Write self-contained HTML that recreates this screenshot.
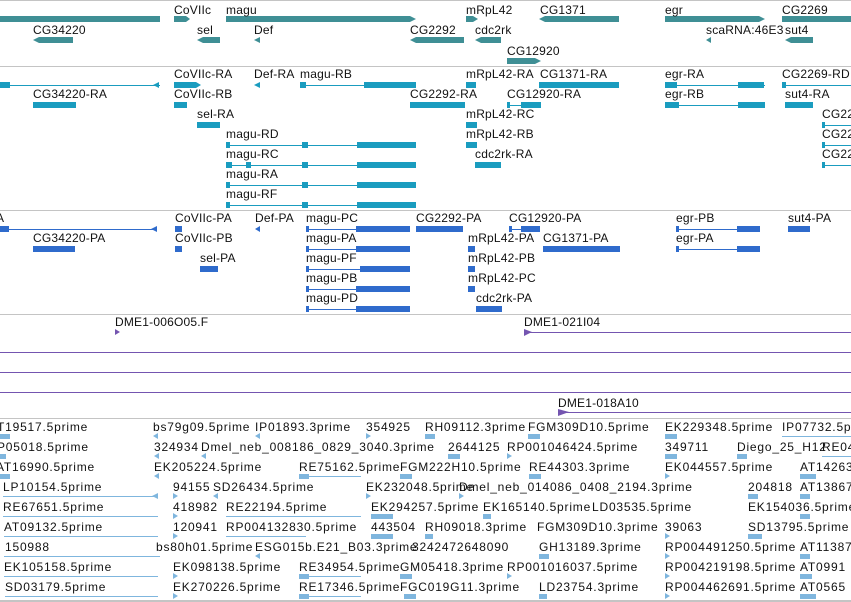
<!DOCTYPE html>
<html><head><meta charset="utf-8"><style>
html,body{margin:0;padding:0;background:#fff;width:851px;height:602px;overflow:hidden}
svg{display:block}
text{font-family:"Liberation Sans","DejaVu Sans",sans-serif;font-size:12px;fill:#111;letter-spacing:0.2px}
.lo text{letter-spacing:0.8px}
</style></head><body>
<svg width="851" height="602" viewBox="0 0 851 602">
<g fill="#c4c4c4">
<rect x="0" y="0" width="851" height="1"/>
<rect x="0" y="66" width="851" height="1"/>
<rect x="0" y="210" width="851" height="1"/>
<rect x="0" y="314" width="851" height="1"/>
<rect x="0" y="418" width="851" height="1"/>
<rect x="0" y="600" width="851" height="2"/>
</g>

<g fill="#3f8f95">
<rect x="0" y="16" width="160" height="6"/>
<polygon points="174,16 186,16 190,19 186,22 174,22"/>
<polygon points="226,16 410,16 416,19 410,22 226,22"/>
<polygon points="466,16 473,16 478,19 473,22 466,22"/>
<polygon points="545,16 619,16 619,22 545,22 539,19"/>
<polygon points="665,16 759,16 765,19 759,22 665,22"/>
<rect x="782" y="16" width="69" height="6"/>
<polygon points="39,37 73,37 73,43 39,43 33,40"/>
<polygon points="203,37 220,37 220,43 203,43 197,40"/>
<polygon points="254,40 260,37 260,43"/>
<polygon points="416,37 464,37 464,43 416,43 410,40"/>
<polygon points="481,37 501,37 501,43 481,43 475,40"/>
<polygon points="706,40 711,37 711,43"/>
<polygon points="791,37 813,37 813,43 791,43 785,40"/>
<polygon points="507,58 535,58 541,61 535,64 507,64"/>
</g>
<g>
<text x="174" y="14">CoVIIc</text><text x="226" y="14">magu</text><text x="466" y="14">mRpL42</text><text x="540" y="14">CG1371</text><text x="665" y="14">egr</text><text x="782" y="14">CG2269</text>
<text x="33" y="34">CG34220</text><text x="197" y="34">sel</text><text x="254" y="34">Def</text><text x="410" y="34">CG2292</text><text x="475" y="34">cdc2rk</text><text x="706" y="34">scaRNA:46E3</text><text x="785" y="34">sut4</text>
<text x="507" y="55">CG12920</text>
</g>

<g fill="#1a9cbf">
<rect x="0" y="85" width="160" height="1"/><rect x="0" y="82" width="10" height="6"/><polygon points="153,85 159,82 159,88"/>
<rect x="174" y="82" width="22" height="6"/><polygon points="196,82 201,85 196,88"/>
<polygon points="254,85 260,82 260,88"/>
<rect x="300" y="85" width="116" height="1"/><rect x="300" y="82" width="6" height="6"/><rect x="364" y="82" width="52" height="6"/>
<rect x="466" y="82" width="10" height="6"/>
<rect x="539" y="82" width="80" height="6"/>
<rect x="665" y="85" width="100" height="1"/><rect x="665" y="82" width="12" height="6"/><rect x="738" y="82" width="26" height="6"/>
<rect x="782" y="85" width="69" height="1"/><rect x="782" y="82" width="4" height="6"/>

<rect x="33" y="102" width="43" height="6"/>
<rect x="174" y="102" width="13" height="6"/>
<rect x="410" y="102" width="55" height="6"/>
<rect x="507" y="105" width="34" height="1"/><rect x="507" y="102" width="3" height="6"/><rect x="521" y="102" width="20" height="6"/>
<rect x="665" y="105" width="100" height="1"/><rect x="665" y="102" width="14" height="6"/><rect x="738" y="102" width="27" height="6"/>
<rect x="785" y="102" width="28" height="6"/>

<rect x="197" y="122" width="23" height="6"/>
<rect x="466" y="122" width="11" height="6"/>
<rect x="822" y="125" width="29" height="1"/><rect x="822" y="122" width="3" height="6"/>

<rect x="226" y="145" width="190" height="1"/><rect x="226" y="142" width="4" height="6"/><rect x="302" y="142" width="6" height="6"/><rect x="357" y="142" width="59" height="6"/>
<rect x="466" y="142" width="11" height="6"/>
<rect x="822" y="145" width="29" height="1"/><rect x="822" y="142" width="3" height="6"/>

<rect x="226" y="165" width="190" height="1"/><rect x="226" y="162" width="6" height="6"/><rect x="246" y="162" width="5" height="6"/><rect x="302" y="162" width="6" height="6"/><rect x="357" y="162" width="59" height="6"/>
<rect x="475" y="162" width="26" height="6"/>
<rect x="822" y="165" width="29" height="1"/><rect x="822" y="162" width="3" height="6"/>

<rect x="226" y="185" width="190" height="1"/><rect x="226" y="182" width="4" height="6"/><rect x="302" y="182" width="6" height="6"/><rect x="357" y="182" width="59" height="6"/>
<rect x="226" y="205" width="190" height="1"/><rect x="226" y="202" width="4" height="6"/><rect x="302" y="202" width="6" height="6"/><rect x="357" y="202" width="59" height="6"/>
</g>
<g>
<text x="174" y="78">CoVIIc-RA</text><text x="254" y="78">Def-RA</text><text x="300" y="78">magu-RB</text><text x="466" y="78">mRpL42-RA</text><text x="540" y="78">CG1371-RA</text><text x="665" y="78">egr-RA</text><text x="782" y="78">CG2269-RD</text>
<text x="33" y="98">CG34220-RA</text><text x="174" y="98">CoVIIc-RB</text><text x="410" y="98">CG2292-RA</text><text x="507" y="98">CG12920-RA</text><text x="665" y="98">egr-RB</text><text x="785" y="98">sut4-RA</text>
<text x="197" y="118">sel-RA</text><text x="466" y="118">mRpL42-RC</text><text x="822" y="118">CG22</text>
<text x="226" y="138">magu-RD</text><text x="466" y="138">mRpL42-RB</text><text x="822" y="138">CG22</text>
<text x="226" y="158">magu-RC</text><text x="475" y="158">cdc2rk-RA</text><text x="822" y="158">CG22</text>
<text x="226" y="178">magu-RA</text>
<text x="226" y="198">magu-RF</text>
</g>

<g fill="#2f6bcc">
<rect x="0" y="229" width="157" height="1"/><rect x="0" y="226" width="9" height="6"/><polygon points="151,229 157,226 157,232"/>
<rect x="175" y="226" width="7" height="6"/>
<polygon points="255,229 260,226 260,232"/>
<rect x="306" y="229" width="104" height="1"/><rect x="306" y="226" width="3" height="6"/><rect x="356" y="226" width="54" height="6"/>
<rect x="416" y="226" width="47" height="6"/>
<rect x="509" y="229" width="31" height="1"/><rect x="509" y="226" width="3" height="6"/><rect x="521" y="226" width="19" height="6"/>
<rect x="676" y="229" width="84" height="1"/><rect x="676" y="226" width="3" height="6"/><rect x="737" y="226" width="23" height="6"/>
<rect x="788" y="226" width="22" height="6"/>
<rect x="33" y="246" width="42" height="6"/>
<rect x="175" y="246" width="7" height="6"/>
<rect x="306" y="249" width="104" height="1"/><rect x="306" y="246" width="3" height="6"/><rect x="356" y="246" width="54" height="6"/>
<rect x="468" y="246" width="7" height="6"/>
<rect x="543" y="246" width="77" height="6"/>
<rect x="676" y="249" width="84" height="1"/><rect x="676" y="246" width="3" height="6"/><rect x="737" y="246" width="23" height="6"/>
<rect x="200" y="266" width="18" height="6"/>
<rect x="306" y="269" width="104" height="1"/><rect x="306" y="266" width="3" height="6"/><rect x="360" y="266" width="50" height="6"/>
<rect x="468" y="266" width="7" height="6"/>
<rect x="306" y="289" width="104" height="1"/><rect x="306" y="286" width="3" height="6"/><rect x="356" y="286" width="54" height="6"/>
<rect x="468" y="286" width="7" height="6"/>
<rect x="306" y="309" width="104" height="1"/><rect x="306" y="306" width="3" height="6"/><rect x="356" y="306" width="54" height="6"/>
<rect x="476" y="306" width="26" height="6"/>
</g>
<g>
<text x="-4" y="222">A</text><text x="175" y="222">CoVIIc-PA</text><text x="255" y="222">Def-PA</text><text x="306" y="222">magu-PC</text><text x="416" y="222">CG2292-PA</text><text x="509" y="222">CG12920-PA</text><text x="676" y="222">egr-PB</text><text x="788" y="222">sut4-PA</text>
<text x="33" y="242">CG34220-PA</text><text x="175" y="242">CoVIIc-PB</text><text x="306" y="242">magu-PA</text><text x="468" y="242">mRpL42-PA</text><text x="543" y="242">CG1371-PA</text><text x="676" y="242">egr-PA</text>
<text x="200" y="262">sel-PA</text><text x="306" y="262">magu-PF</text><text x="468" y="262">mRpL42-PB</text>
<text x="306" y="282">magu-PB</text><text x="468" y="282">mRpL42-PC</text>
<text x="306" y="302">magu-PD</text><text x="476" y="302">cdc2rk-PA</text>
</g>

<g fill="#7455b0">
<polygon points="115,329 120,332 115,335"/>
<rect x="524" y="332" width="327" height="1"/><polygon points="524,329 532,332 524,336"/>
<rect x="0" y="352" width="851" height="1"/>
<rect x="0" y="372" width="851" height="1"/>
<rect x="0" y="392" width="851" height="1"/>
<rect x="558" y="412" width="293" height="1"/><polygon points="558,409 569,412 558,416"/>
</g>
<text x="115" y="326">DME1-006O05.F</text>
<text x="524" y="326">DME1-021I04</text>
<text x="558" y="407">DME1-018A10</text>

<g fill="#7fb6de">
<rect x="0" y="434" width="10" height="5"/><polygon points="153,436 158,433 158,439"/><polygon points="255,436 260,433 260,439"/><polygon points="366,433 371,436 366,439"/><rect x="425" y="434" width="10" height="5"/><rect x="528" y="434" width="12" height="5"/><rect x="665" y="434" width="12" height="5"/><rect x="782" y="436" width="69" height="1"/>
<rect x="0" y="454" width="6" height="5"/><polygon points="154,456 159,453 159,459"/><polygon points="201,456 206,453 206,459"/><rect x="448" y="454" width="12" height="5"/><polygon points="507,453 512,456 507,459"/><rect x="665" y="454" width="12" height="5"/><rect x="737" y="454" width="10" height="5"/><rect x="822" y="456" width="29" height="1"/>
<rect x="0" y="474" width="10" height="5"/><polygon points="154,476 159,473 159,479"/><rect x="299" y="476" width="62" height="1"/><rect x="299" y="474" width="10" height="5"/><rect x="400" y="474" width="12" height="5"/><rect x="529" y="474" width="12" height="5"/><polygon points="665,473 670,476 665,479"/><rect x="800" y="474" width="16" height="5"/>
<rect x="3" y="496" width="155" height="1"/><polygon points="152,496 158,493 158,499"/><polygon points="173,493 178,496 173,499"/><polygon points="213,496 218,493 218,499"/><polygon points="366,493 371,496 366,499"/><polygon points="459,493 464,496 459,499"/><rect x="748" y="494" width="10" height="5"/><rect x="800" y="494" width="10" height="5"/>
<rect x="3" y="516" width="155" height="1"/><polygon points="173,513 178,516 173,519"/><rect x="226" y="516" width="135" height="1"/><rect x="371" y="514" width="22" height="5"/><rect x="483" y="514" width="8" height="5"/><rect x="800" y="514" width="10" height="5"/>
<rect x="4" y="536" width="154" height="1"/><polygon points="173,533 178,536 173,539"/><rect x="226" y="536" width="80" height="1"/><rect x="371" y="534" width="22" height="5"/><rect x="425" y="534" width="8" height="5"/><polygon points="665,533 670,536 665,539"/><rect x="748" y="534" width="14" height="5"/>
<rect x="4" y="556" width="156" height="1"/><polygon points="255,556 260,553 260,559"/><rect x="539" y="554" width="10" height="5"/><polygon points="665,553 670,556 665,559"/><rect x="800" y="554" width="10" height="5"/>
<rect x="4" y="576" width="154" height="1"/><polygon points="173,573 178,576 173,579"/><rect x="299" y="576" width="62" height="1"/><rect x="299" y="574" width="10" height="5"/><rect x="400" y="574" width="12" height="5"/><polygon points="507,573 512,576 507,579"/><polygon points="665,573 670,576 665,579"/><rect x="800" y="574" width="12" height="5"/>
<rect x="5" y="596" width="153" height="1"/><polygon points="173,593 178,596 173,599"/><rect x="299" y="596" width="62" height="1"/><rect x="299" y="594" width="10" height="5"/><rect x="404" y="594" width="12" height="5"/><rect x="539" y="594" width="8" height="5"/><polygon points="665,593 670,596 665,599"/><rect x="800" y="594" width="16" height="5"/>
</g>
<g class="lo">
<text x="-3" y="431">T19517.5prime</text><text x="153" y="431">bs79g09.5prime</text><text x="255" y="431">IP01893.3prime</text><text x="366" y="431">354925</text><text x="425" y="431">RH09112.3prime</text><text x="528" y="431">FGM309D10.5prime</text><text x="665" y="431">EK229348.5prime</text><text x="782" y="431">IP07732.5prime</text>
<text x="-3" y="451">P05018.5prime</text><text x="154" y="451">324934</text><text x="201" y="451">Dmel_neb_008186_0829_3040.3prime</text><text x="448" y="451">2644125</text><text x="507" y="451">RP001046424.5prime</text><text x="665" y="451">349711</text><text x="737" y="451">Diego_25_H12</text><text x="822" y="451">RE04</text>
<text x="-4" y="471">AT16990.5prime</text><text x="154" y="471">EK205224.5prime</text><text x="299" y="471">RE75162.5prime</text><text x="400" y="471">FGM222H10.5prime</text><text x="529" y="471">RE44303.3prime</text><text x="665" y="471">EK044557.5prime</text><text x="800" y="471">AT14263</text>
<text x="3" y="491">LP10154.5prime</text><text x="173" y="491">94155</text><text x="213" y="491">SD26434.5prime</text><text x="366" y="491">EK232048.5prime</text><text x="459" y="491">Dmel_neb_014086_0408_2194.3prime</text><text x="748" y="491">204818</text><text x="800" y="491">AT13867</text>
<text x="3" y="511">RE67651.5prime</text><text x="173" y="511">418982</text><text x="226" y="511">RE22194.5prime</text><text x="371" y="511">EK294257.5prime</text><text x="483" y="511">EK165140.5prime</text><text x="592" y="511">LD03535.5prime</text><text x="748" y="511">EK154036.5prime</text>
<text x="4" y="531">AT09132.5prime</text><text x="173" y="531">120941</text><text x="226" y="531">RP004132830.5prime</text><text x="371" y="531">443504</text><text x="425" y="531">RH09018.3prime</text><text x="537" y="531">FGM309D10.3prime</text><text x="665" y="531">39063</text><text x="748" y="531">SD13795.5prime</text>
<text x="5" y="551">150988</text><text x="156" y="551">bs80h01.5prime</text><text x="255" y="551">ESG015b.E21_B03.3prime</text><text x="412" y="551">3242472648090</text><text x="539" y="551">GH13189.3prime</text><text x="665" y="551">RP004491250.5prime</text><text x="800" y="551">AT11387</text>
<text x="4" y="571">EK105158.5prime</text><text x="173" y="571">EK098138.5prime</text><text x="299" y="571">RE34954.5prime</text><text x="400" y="571">GM05418.3prime</text><text x="507" y="571">RP001016037.5prime</text><text x="665" y="571">RP004219198.5prime</text><text x="800" y="571">AT0991</text>
<text x="5" y="591">SD03179.5prime</text><text x="173" y="591">EK270226.5prime</text><text x="299" y="591">RE17346.5prime</text><text x="400" y="591">FGC019G11.3prime</text><text x="539" y="591">LD23754.3prime</text><text x="665" y="591">RP004462691.5prime</text><text x="800" y="591">AT0565</text>
</g>
</svg>
</body></html>
